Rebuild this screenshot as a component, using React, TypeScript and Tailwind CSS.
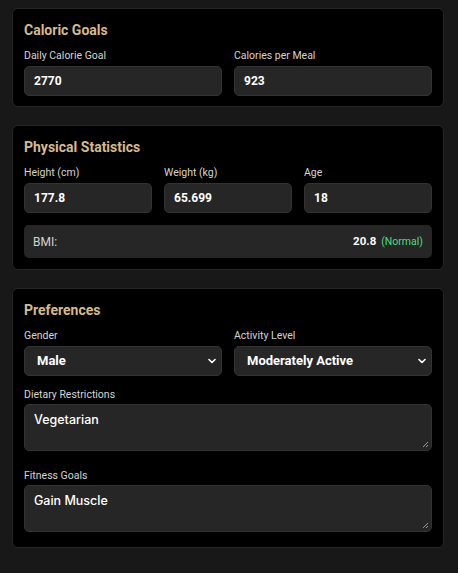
import React from "react";

const font = { fontFamily: "Roboto, 'Noto Sans', sans-serif" };

function Label({ children, tight }: { children: React.ReactNode; tight?: boolean }) {
  return (
    <div className={"text-[10.5px] leading-[16px] text-[#d4d4d4] " + (tight ? "mb-[1px]" : "mb-[2px]")}>
      {children}
    </div>
  );
}

function Field({ value }: { value: string }) {
  return (
    <div className="h-[30px] rounded-[5px] bg-[#262626] border border-[#333333] flex items-center px-[9px] text-[12px] font-bold text-white">
      {value}
    </div>
  );
}

function Select({ value }: { value: string }) {
  return (
    <div className="h-[30px] rounded-[5px] bg-[#262626] border border-[#333333] flex items-center justify-between pl-[12px] pr-[5px] text-[13px] font-bold text-white">
      <span>{value}</span>
      <svg width="8" height="6" viewBox="0 0 8 6" fill="none">
        <path d="M1 1.5 L4 4.5 L7 1.5" stroke="white" strokeWidth="1.6" strokeLinecap="round" strokeLinejoin="round" />
      </svg>
    </div>
  );
}

function TextArea({ value }: { value: string }) {
  return (
    <div
      style={{ fontFamily: "Inter, Roboto, sans-serif" }}
      className="relative h-[47px] rounded-[5px] bg-[#262626] border border-[#333333] px-[9px] pt-[6px] text-[12.5px] font-medium text-white"
    >
      {value}
      <svg className="absolute right-[2px] bottom-[2px]" width="7" height="7" viewBox="0 0 7 7">
        <path d="M6 1 L1 6 M6 4 L4 6" stroke="#9a9a9a" strokeWidth="1" />
      </svg>
    </div>
  );
}

function Card({ title, children, pb }: { title: string; children: React.ReactNode; pb: string }) {
  return (
    <div className={"bg-black border border-[#262626] rounded-[6px] px-[11px] pt-[12px] " + pb}>
      <div className="text-[14px] leading-[18px] font-bold text-[#d6b98f] mb-[9px]">{title}</div>
      {children}
    </div>
  );
}

export default function App() {
  return (
    <div style={font} className="w-[458px] h-[573px] bg-[#181818] pl-[12px] pr-[14px] pt-[8px] flex flex-col gap-[18px]">
      <Card title="Caloric Goals" pb="pb-[10px]">
        <div className="grid grid-cols-2 gap-[12px]">
          <div>
            <Label>Daily Calorie Goal</Label>
            <Field value="2770" />
          </div>
          <div>
            <Label>Calories per Meal</Label>
            <Field value="923" />
          </div>
        </div>
      </Card>
      <Card title="Physical Statistics" pb="pb-[11px]">
        <div className="grid grid-cols-3 gap-[12px]">
          <div>
            <Label>Height (cm)</Label>
            <Field value="177.8" />
          </div>
          <div>
            <Label>Weight (kg)</Label>
            <Field value="65.699" />
          </div>
          <div>
            <Label>Age</Label>
            <Field value="18" />
          </div>
        </div>
        <div className="mt-[12px] h-[33px] rounded-[5px] bg-[#262626] flex items-center justify-between px-[9px]">
          <span className="text-[12px] text-[#d4d4d4]">BMI:</span>
          <span className="flex items-baseline gap-[5px]">
            <span className="text-[11.5px] font-bold text-white">20.8</span>
            <span className="text-[10.5px] text-[#4ade80]">(Normal)</span>
          </span>
        </div>
      </Card>
      <Card title="Preferences" pb="pb-[15px]">
        <div className="grid grid-cols-2 gap-[12px]">
          <div>
            <Label>Gender</Label>
            <Select value="Male" />
          </div>
          <div>
            <Label>Activity Level</Label>
            <Select value="Moderately Active" />
          </div>
        </div>
        <div className="mt-[11px]">
          <Label tight>Dietary Restrictions</Label>
          <TextArea value="Vegetarian" />
        </div>
        <div className="mt-[17px]">
          <Label tight>Fitness Goals</Label>
          <TextArea value="Gain Muscle" />
        </div>
      </Card>
    </div>
  );
}
